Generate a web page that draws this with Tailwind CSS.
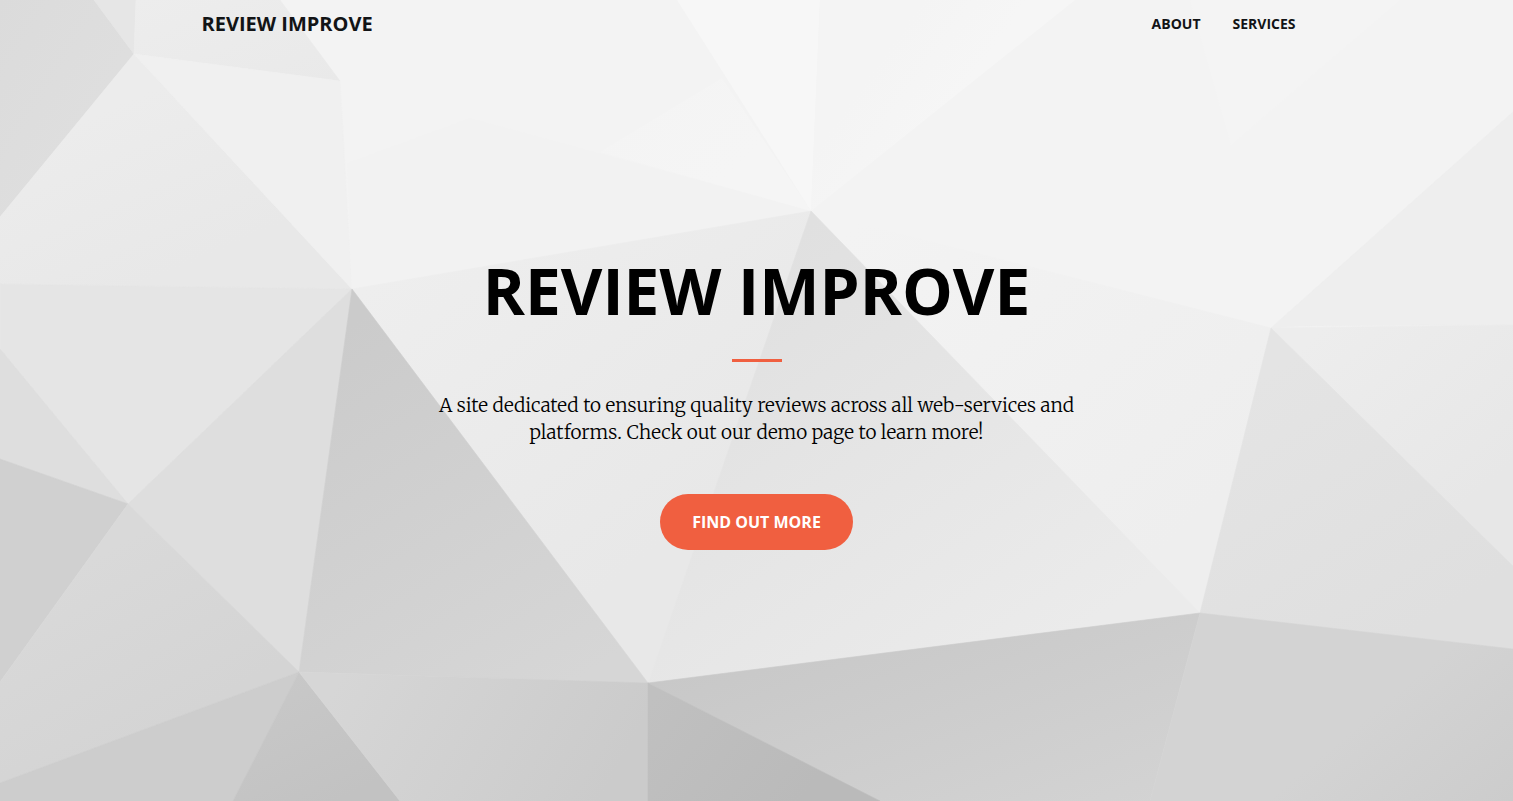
<!DOCTYPE html>
<html lang="en">
<head>
<meta charset="utf-8">
<meta name="viewport" content="width=device-width, initial-scale=1">
<title>Review Improve</title>
<script src="https://cdn.jsdelivr.net/npm/@tailwindcss/browser@4"></script>
</head>
<body class="bg-[#f3f3f3] font-['Open_Sans',sans-serif]">
<div class="relative isolate min-h-screen overflow-hidden">
  <!-- Faceted backdrop -->
  <svg class="absolute inset-0 -z-10 h-full w-full" viewBox="0 0 1513 801" preserveAspectRatio="xMidYMid slice" aria-hidden="true">
    <defs>
      <linearGradient id="a" x1="0" y1="0" x2="1" y2="1"><stop stop-color="#dbdbdb"/><stop offset="1" stop-color="#e0e0e0"/></linearGradient>
      <linearGradient id="b" x1="0" y1="0" x2="1" y2="1"><stop stop-color="#ededed"/><stop offset="1" stop-color="#e9e9e9"/></linearGradient>
      <linearGradient id="c" gradientUnits="userSpaceOnUse" x1="60" y1="130" x2="130" y2="290"><stop stop-color="#ececec"/><stop offset="1" stop-color="#e8e8e8"/></linearGradient>
      <linearGradient id="d" gradientUnits="userSpaceOnUse" x1="400" y1="260" x2="640" y2="560"><stop stop-color="#eeeeee"/><stop offset="1" stop-color="#e8e8e8"/></linearGradient>
      <linearGradient id="e" gradientUnits="userSpaceOnUse" x1="800" y1="230" x2="1080" y2="630"><stop stop-color="#e0e0e0"/><stop offset="1" stop-color="#ebebeb"/></linearGradient>
      <linearGradient id="f" gradientUnits="userSpaceOnUse" x1="340" y1="330" x2="560" y2="690"><stop stop-color="#cbcbcb"/><stop offset="1" stop-color="#d6d6d6"/></linearGradient>
      <linearGradient id="g" gradientUnits="userSpaceOnUse" x1="90" y1="560" x2="180" y2="720"><stop stop-color="#d9d9d9"/><stop offset="1" stop-color="#d4d4d4"/></linearGradient>
      <linearGradient id="h" gradientUnits="userSpaceOnUse" x1="280" y1="680" x2="340" y2="800"><stop stop-color="#c8c8c8"/><stop offset="1" stop-color="#c2c2c2"/></linearGradient>
      <linearGradient id="i" gradientUnits="userSpaceOnUse" x1="350" y1="660" x2="600" y2="800"><stop stop-color="#d6d6d6"/><stop offset="1" stop-color="#cbcbcb"/></linearGradient>
      <linearGradient id="j" gradientUnits="userSpaceOnUse" x1="660" y1="690" x2="800" y2="800"><stop stop-color="#c0c0c0"/><stop offset="1" stop-color="#bababa"/></linearGradient>
      <linearGradient id="k" gradientUnits="userSpaceOnUse" x1="648" y1="683" x2="751" y2="958"><stop stop-color="#c8c8c8"/><stop offset="1" stop-color="#d3d3d3"/></linearGradient>
      <linearGradient id="l" gradientUnits="userSpaceOnUse" x1="1400" y1="690" x2="1500" y2="810"><stop stop-color="#d3d3d3"/><stop offset="1" stop-color="#cccccc"/></linearGradient>
      <linearGradient id="m" gradientUnits="userSpaceOnUse" x1="1271" y1="370" x2="1430" y2="620"><stop stop-color="#e4e4e4"/><stop offset="1" stop-color="#dfdfdf"/></linearGradient>
      <linearGradient id="n" gradientUnits="userSpaceOnUse" x1="1320" y1="330" x2="1470" y2="500"><stop stop-color="#ededed"/><stop offset="1" stop-color="#e7e7e7"/></linearGradient>
      <linearGradient id="o" gradientUnits="userSpaceOnUse" x1="850" y1="230" x2="1150" y2="560"><stop stop-color="#f3f3f3"/><stop offset="1" stop-color="#eeeeee"/></linearGradient>
      <linearGradient id="p" gradientUnits="userSpaceOnUse" x1="880" y1="60" x2="950" y2="110"><stop stop-color="#f4f4f4"/><stop offset="1" stop-color="#f6f6f6"/></linearGradient>
      <linearGradient id="q" gradientUnits="userSpaceOnUse" x1="620" y1="110" x2="700" y2="200"><stop stop-color="#f4f4f4"/><stop offset="1" stop-color="#f5f5f5"/></linearGradient>
    </defs>
    <rect width="1513" height="801" fill="#f3f3f3"/>
    <g stroke-width="0.6">
      <path d="M0 0H94L134 54L0 217Z" fill="url(#a)" stroke="url(#a)"/>
      <path d="M94 0H136L134 54Z" fill="#e6e6e6" stroke="#e6e6e6"/>
      <path d="M136 0H280L340 81L134 54Z" fill="url(#b)" stroke="url(#b)"/>
      <path d="M134 54L0 217V284L352 289Z" fill="url(#c)" stroke="url(#c)"/>
      <path d="M134 54L340 81L352 289Z" fill="#f0f0f0" stroke="#f0f0f0"/>
      <path d="M347 163L470 118L811 211L352 289Z" fill="#f2f2f2"/>
      <path d="M600 152L722 78L811 211Z" fill="url(#q)"/>
      <path d="M677 0H820L811 211Z" fill="#f7f7f7"/>
      <path d="M820 0H1075L811 211Z" fill="url(#p)"/>
      <path d="M1190 0H1400L1231 145Z" fill="#f4f4f4"/>
      <path d="M1271 328L1513 112V325L1300 326Z" fill="#eeeeee" stroke="#eeeeee"/>
      <path d="M1271 328L1513 325V566Z" fill="url(#n)" stroke="url(#n)"/>
      <path d="M811 211L1271 328L1200 613Z" fill="url(#o)" stroke="url(#o)"/>
      <path d="M1271 328L1513 566V649L1200 613Z" fill="url(#m)" stroke="url(#m)"/>
      <path d="M352 289L811 211L648 683Z" fill="url(#d)" stroke="url(#d)"/>
      <path d="M811 211L1200 613L648 683Z" fill="url(#e)" stroke="url(#e)"/>
      <path d="M0 284L352 289L128 504L0 349Z" fill="#e5e5e5" stroke="#e5e5e5"/>
      <path d="M0 349L128 504L0 459Z" fill="#dedede" stroke="#dedede"/>
      <path d="M352 289L299 672L128 504Z" fill="#dedede" stroke="#dedede"/>
      <path d="M0 459L128 504L0 682Z" fill="#d0d0d0" stroke="#d0d0d0"/>
      <path d="M128 504L299 672L0 783V682Z" fill="url(#g)" stroke="url(#g)"/>
      <path d="M352 289L648 683L299 672Z" fill="url(#f)" stroke="url(#f)"/>
      <path d="M299 672L0 783V801H233Z" fill="#cdcdcd" stroke="#cdcdcd"/>
      <path d="M299 672L233 801H400Z" fill="url(#h)" stroke="url(#h)"/>
      <path d="M299 672L648 683V801H400Z" fill="url(#i)" stroke="url(#i)"/>
      <path d="M648 683L1200 613L1150 801H880Z" fill="url(#k)" stroke="url(#k)"/>
      <path d="M648 683V801H880Z" fill="url(#j)" stroke="url(#j)"/>
      <path d="M1200 613L1513 649V801H1150Z" fill="url(#l)" stroke="url(#l)"/>
    </g>
  </svg>

  <header class="absolute inset-x-0 top-0">
    <nav class="mx-auto flex h-12 max-w-[1110px] items-center justify-between font-bold text-[#121416]" aria-label="Main">
      <a href="#top" class="text-xl">REVIEW IMPROVE</a>
      <ul class="flex text-sm">
        <li><a href="#about" class="block px-4 py-2">ABOUT</a></li>
        <li><a href="#services" class="block px-4 py-2">SERVICES</a></li>
      </ul>
    </nav>
  </header>

  <main id="top" class="flex min-h-screen flex-col items-center justify-center text-center">
    <h1 class="text-[64px] leading-[77px] font-bold text-black">REVIEW IMPROVE</h1>
    <hr class="my-[30px] h-[3px] w-[50px] border-0 bg-[#f05f40]">
    <p class="mb-12 max-w-[700px] font-['Merriweather','Liberation_Serif',serif] text-[19px] leading-[27px] font-light text-black">A site dedicated to ensuring quality reviews across all web-services and platforms. Check out our demo page to learn more!</p>
    <a href="#about" class="flex h-14 items-center rounded-full bg-[#f05f40] px-8 text-base font-bold text-white">FIND OUT MORE</a>
  </main>
</div>
</body>
</html>
